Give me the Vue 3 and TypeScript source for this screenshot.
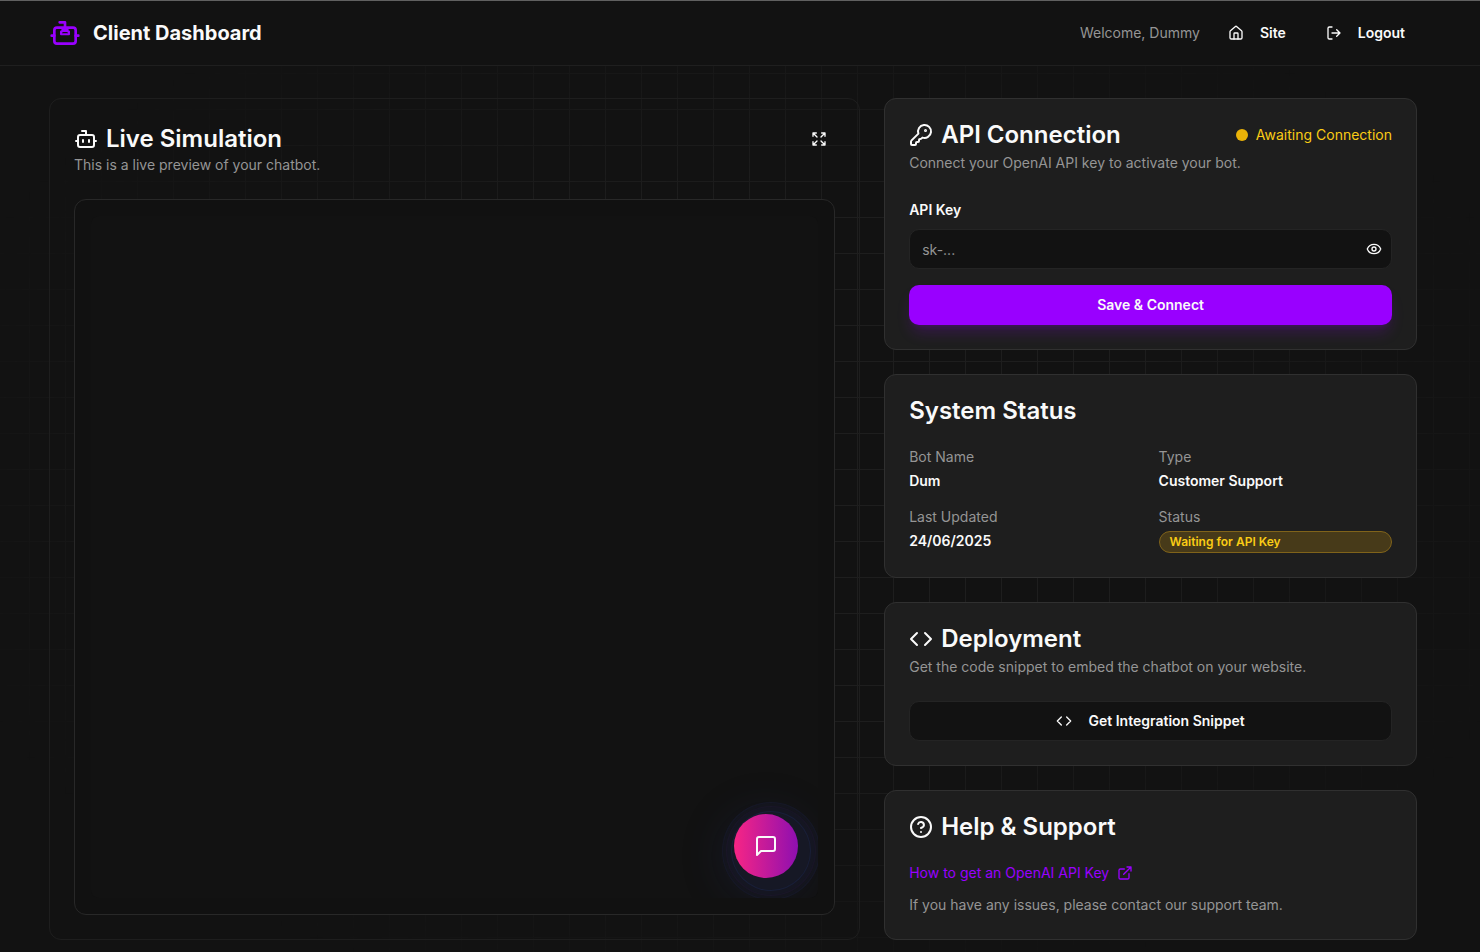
<script setup lang="ts">
import { ref } from 'vue'

interface StatusItem {
  label: string
  value: string
  badge?: boolean
}

const apiKey = ref('')
const keyVisible = ref(false)
const items: StatusItem[] = [
  { label: 'Bot Name', value: 'Dum' },
  { label: 'Type', value: 'Customer Support' },
  { label: 'Last Updated', value: '24/06/2025' },
  { label: 'Status', value: 'Waiting for API Key', badge: true },
]
</script>

<template>
  <div class="page">
    <div class="grid-lines" aria-hidden="true"></div>
    <header class="topbar">
      <div class="container topbar-inner">
        <div class="brand">
          <svg class="icon logo" viewBox="0 0 24 24" aria-hidden="true">
            <path d="M12 8V4H8" />
            <rect x="4" y="8" width="16" height="12" rx="2" />
            <path d="M2 14h2M20 14h2" />
            <path d="M9 13h6v-2.2h-1V9.500h-4v1.300H9zM10 10.500h4" stroke-width="1.500" />
          </svg>
          <h1>Client Dashboard</h1>
        </div>
        <nav class="topnav">
          <span class="welcome">Welcome, Dummy</span>
          <a class="nav-btn" href="#site">
            <svg class="icon sm" viewBox="0 0 24 24" aria-hidden="true">
              <path d="M15 21v-8a1 1 0 0 0-1-1h-4a1 1 0 0 0-1 1v8" />
              <path d="M3 10a2 2 0 0 1 .709-1.528l7-5.999a2 2 0 0 1 2.582 0l7 5.999A2 2 0 0 1 21 10v9a2 2 0 0 1-2 2H5a2 2 0 0 1-2-2z" />
            </svg>
            Site
          </a>
          <button class="nav-btn" type="button">
            <svg class="icon sm" viewBox="0 0 24 24" aria-hidden="true">
              <path d="M9 21H5a2 2 0 0 1-2-2V5a2 2 0 0 1 2-2h4" />
              <path d="m16 17 5-5-5-5M21 12H9" />
            </svg>
            Logout
          </button>
        </nav>
      </div>
    </header>

    <main class="container layout">
      <section class="card preview">
        <div class="preview-head">
          <div>
            <h2 class="preview-title">
              <svg class="icon" viewBox="0 0 24 24" aria-hidden="true">
                <path d="M12 8V4H8" />
                <rect x="4" y="8" width="16" height="12" rx="2" />
                <path d="M2 14h2M20 14h2M15 13v2M9 13v2" />
              </svg>
              Live Simulation
            </h2>
            <p class="muted">This is a live preview of your chatbot.</p>
          </div>
          <button class="icon-btn" type="button" aria-label="Expand preview">
            <svg class="icon sm" viewBox="0 0 24 24" aria-hidden="true">
              <path d="m15 15 6 6M15 9l6-6M21 16v5h-5M21 8V3h-5M3 16v5h5M3 21l6-6M3 8V3h5M9 9 3 3" />
            </svg>
          </button>
        </div>
        <div class="frame">
          <div class="screen">
            <button class="chat" type="button" aria-label="Open chat">
              <svg class="icon chat-icon" viewBox="0 0 24 24" aria-hidden="true">
                <path d="M21 15a2 2 0 0 1-2 2H7l-4 4V5a2 2 0 0 1 2-2h14a2 2 0 0 1 2 2z" />
              </svg>
            </button>
          </div>
        </div>
      </section>

      <div class="side">
        <section class="card panel">
          <div class="title-row">
            <h2 class="title">
              <svg class="icon" viewBox="0 0 24 24" aria-hidden="true">
                <path d="M2.586 17.414A2 2 0 0 0 2 18.828V21a1 1 0 0 0 1 1h3a1 1 0 0 0 1-1v-1a1 1 0 0 1 1-1h1a1 1 0 0 0 1-1v-1a1 1 0 0 1 1-1h.172a2 2 0 0 0 1.414-.586l.814-.814a6.500 6.500 0 1 0-4-4z" />
                <circle cx="16.500" cy="7.500" r=".5" fill="currentColor" />
              </svg>
              API Connection
            </h2>
            <span class="awaiting"><span class="dot"></span>Awaiting Connection</span>
          </div>
          <p class="muted desc">Connect your OpenAI API key to activate your bot.</p>
          <form class="key-form" @submit.prevent>
            <label for="api-key">API Key</label>
            <div class="field">
              <input id="api-key" v-model="apiKey" :type="keyVisible ? 'text' : 'password'" placeholder="sk-..." autocomplete="off" />
              <button class="eye" type="button" aria-label="Show API key" @click="keyVisible = !keyVisible">
                <svg class="icon sm" viewBox="0 0 24 24" aria-hidden="true">
                  <path d="M2.062 12.348a1 1 0 0 1 0-.696 10.750 10.750 0 0 1 19.876 0 1 1 0 0 1 0 .696 10.750 10.750 0 0 1-19.876 0" />
                  <circle cx="12" cy="12" r="3" />
                </svg>
              </button>
            </div>
            <button class="primary" type="submit">Save &amp; Connect</button>
          </form>
        </section>

        <section class="card panel">
          <h2 class="title">System Status</h2>
          <dl class="facts">
            <div v-for="item in items" :key="item.label" class="fact">
              <dt>{{ item.label }}</dt>
              <dd :class="{ badge: item.badge }">{{ item.value }}</dd>
            </div>
          </dl>
        </section>

        <section class="card panel">
          <h2 class="title">
            <svg class="icon" viewBox="0 0 24 24" aria-hidden="true">
              <path d="m16 18 6-6-6-6M8 6l-6 6 6 6" />
            </svg>
            Deployment
          </h2>
          <p class="muted desc">Get the code snippet to embed the chatbot on your website.</p>
          <button class="outline" type="button">
            <svg class="icon sm" viewBox="0 0 24 24" aria-hidden="true">
              <path d="m16 18 6-6-6-6M8 6l-6 6 6 6" />
            </svg>
            Get Integration Snippet
          </button>
        </section>

        <section class="card panel">
          <h2 class="title">
            <svg class="icon" viewBox="0 0 24 24" aria-hidden="true">
              <circle cx="12" cy="12" r="10" />
              <path d="M9.090 9a3 3 0 0 1 5.830 1c0 2-3 3-3 3M12 17h.01" />
            </svg>
            Help &amp; Support
          </h2>
          <div class="help">
            <a class="help-link" href="#openai-key">
              How to get an OpenAI API Key
              <svg class="icon sm" viewBox="0 0 24 24" aria-hidden="true">
                <path d="M15 3h6v6M10 14 21 3M18 13v6a2 2 0 0 1-2 2H5a2 2 0 0 1-2-2V8a2 2 0 0 1 2-2h6" />
              </svg>
            </a>
            <p class="muted">If you have any issues, please contact our support team.</p>
          </div>
        </section>
      </div>
    </main>
  </div>
</template>

<style>
body {
  margin: 0;
  background: #121212;
}
</style>

<style scoped>
.page {
  position: relative;
  box-sizing: border-box;
  min-height: 100vh;
  font-family: Inter, "Liberation Sans", sans-serif;
  font-size: 14px;
  line-height: 20px;
  color: #fafafa;
  background: #121212;
}
.page * {
  box-sizing: border-box;
}
h1, h2, p, dl, dd {
  margin: 0;
}
button, input {
  font: inherit;
  color: inherit;
}
button {
  padding: 0;
  border: 0;
  background: none;
  cursor: pointer;
}
.grid-lines {
  position: absolute;
  inset: 0;
  background-image:
    linear-gradient(to right, #1e1e1e 1px, transparent 1px),
    linear-gradient(to bottom, #1e1e1e 1px, transparent 1px);
  background-size: 36px 36px;
  background-position: 29px 1px;
  mask-image: radial-gradient(ellipse at center, #000 40%, transparent 80%);
}
.container {
  width: calc(100% - 112px);
  max-width: 1368px;
  margin-left: 49px;
}
.icon {
  width: 24px;
  height: 24px;
  flex: none;
  fill: none;
  stroke: currentColor;
  stroke-width: 2;
  stroke-linecap: round;
  stroke-linejoin: round;
}
.icon.sm {
  width: 16px;
  height: 16px;
}
.icon.logo {
  width: 32px;
  height: 32px;
  color: #9900ff;
}
.topbar {
  position: relative;
  background: #121212;
  border-top: 1px solid #606060;
  border-bottom: 1px solid #1f1f1f;
}
.topbar-inner {
  display: flex;
  align-items: center;
  justify-content: space-between;
  height: 64px;
}
.brand {
  display: flex;
  align-items: center;
  gap: 12px;
}
h1 {
  font-size: 20px;
  line-height: 28px;
  font-weight: 700;
}
.topnav {
  display: flex;
  align-items: center;
  gap: 16px;
}
.welcome, .muted, dt {
  color: #959595;
}
.nav-btn {
  display: flex;
  align-items: center;
  gap: 16px;
  height: 36px;
  padding: 0 12px;
  font-weight: 600;
  color: #fafafa;
  text-decoration: none;
}
.layout {
  position: relative;
  display: grid;
  grid-template-columns: repeat(5, minmax(0, 1fr));
  gap: 24px;
  padding: 32px 0 12px;
}
.card {
  padding: 24px;
  border: 1px solid #303030;
  border-radius: 12px;
}
.preview {
  grid-column: span 3;
  display: flex;
  flex-direction: column;
  gap: 24px;
  border-color: #1e1e1e;
}
.preview-head, .title-row {
  display: flex;
  align-items: flex-start;
  justify-content: space-between;
}
.title-row {
  align-items: center;
}
.preview-title, .title {
  display: flex;
  align-items: center;
  gap: 8px;
  font-size: 24px;
  line-height: 32px;
  font-weight: 600;
}
.title {
  line-height: 24px;
}
.icon-btn {
  display: grid;
  place-items: center;
  width: 32px;
  height: 32px;
}
.frame {
  flex: 1;
  display: flex;
  padding: 16px;
  background: #111111;
  border: 1px solid #282828;
  border-radius: 12px;
}
.screen {
  flex: 1;
  display: flex;
  align-items: flex-end;
  justify-content: flex-end;
  padding: 20px;
  overflow: hidden;
  background: #121212;
  border-radius: 8px;
}
.chat {
  display: grid;
  place-items: center;
  width: 64px;
  height: 64px;
  border-radius: 50%;
  background: linear-gradient(to right, #f72585, #8e0fb0);
  box-shadow:
    5px 5px 0 7px #161825,
    5px 5px 0 8px #191f38,
    5px 5px 0 12px #151622,
    5px 5px 0 13px #1a1628,
    5px 5px 0 16px #14151e,
    5px 5px 0 17px #161827,
    0 10px 40px 14px rgba(30, 40, 90, 0.22);
}
.side {
  grid-column: span 2;
  display: flex;
  flex-direction: column;
  gap: 24px;
}
.panel {
  background: #1e1e1e;
}
.awaiting {
  display: flex;
  align-items: center;
  gap: 8px;
  color: #facc15;
}
.dot {
  width: 12px;
  height: 12px;
  border-radius: 50%;
  background: #eab308;
}
.desc {
  margin: 6px 0 24px;
}
.key-form {
  display: flex;
  flex-direction: column;
}
label {
  margin-bottom: 6px;
  line-height: 26px;
  font-weight: 600;
}
.field {
  display: flex;
  align-items: center;
  height: 40px;
  margin-bottom: 16px;
  background: #121212;
  border: 1px solid #242424;
  border-radius: 10px;
}
.field input {
  flex: 1;
  min-width: 0;
  height: 38px;
  padding: 0 12px;
  border: 0;
  outline: 0;
  background: none;
}
.field input::placeholder {
  color: #959595;
  opacity: 1;
}
.eye {
  display: grid;
  place-items: center;
  width: 34px;
  height: 38px;
}
.primary {
  height: 40px;
  border-radius: 10px;
  background: #9900ff;
  font-weight: 600;
  box-shadow: 0 10px 15px -3px rgba(153, 0, 255, 0.2), 0 4px 6px -4px rgba(153, 0, 255, 0.2);
}
.facts {
  display: grid;
  grid-template-columns: 1fr 1fr;
  gap: 16px;
  margin-top: 24px;
}
.fact {
  display: flex;
  flex-direction: column;
  gap: 4px;
}
dd {
  font-weight: 600;
}
.badge {
  padding: 0 10px;
  font-size: 12px;
  color: #facc15;
  background: #473a19;
  border: 1px solid #80631a;
  border-radius: 11px;
}
.outline {
  display: flex;
  align-items: center;
  justify-content: center;
  gap: 16px;
  width: 100%;
  height: 40px;
  background: #121212;
  border: 1px solid #242424;
  border-radius: 10px;
  font-weight: 600;
}
.help {
  display: flex;
  flex-direction: column;
  align-items: flex-start;
  gap: 12px;
  margin-top: 24px;
}
.help-link {
  display: flex;
  align-items: center;
  gap: 8px;
  color: #9900ff;
  text-decoration: none;
}
</style>
